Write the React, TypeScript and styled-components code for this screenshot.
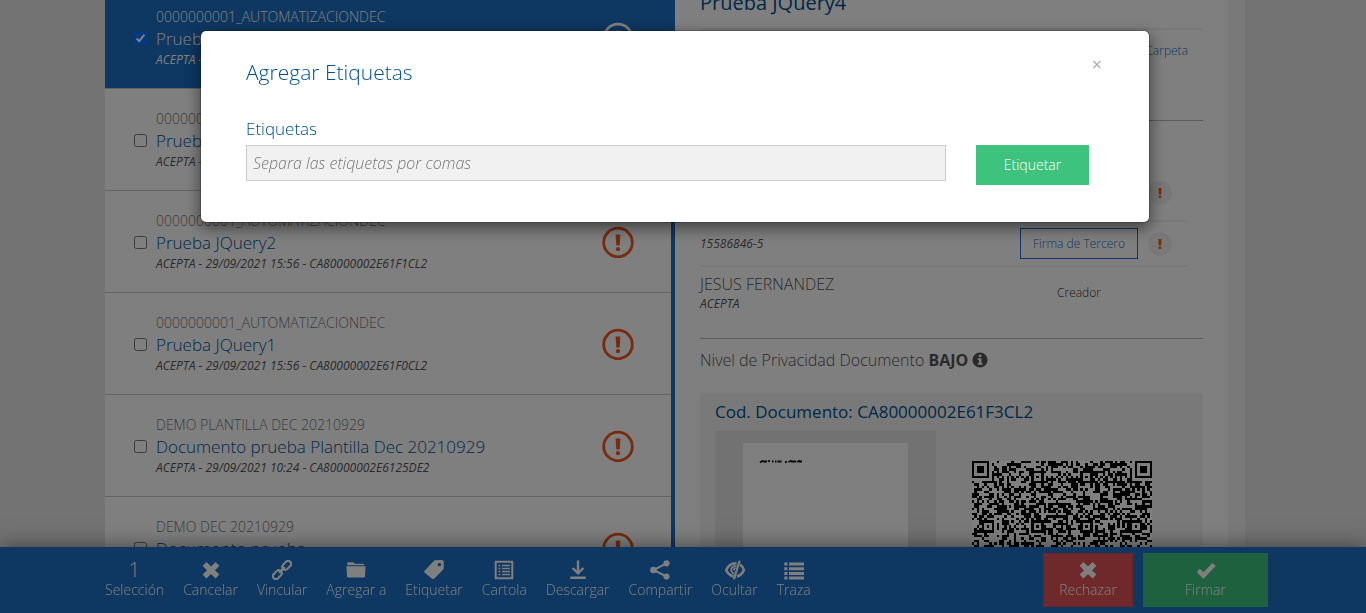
import React from "react";
import styled, { createGlobalStyle, css } from "styled-components";

const c = {
  brand: "#1c6ec2",
  ink: "#00508f",
  green: "#3dc37e",
  red: "#de5356",
  alert: "#f0561d",
  grey: "#777777",
  text: "#555555",
};

const GlobalStyle = createGlobalStyle`
  * { box-sizing: border-box; }
  html, body { margin: 0; height: 100%; overflow: hidden; }
  body { background: #e6e6e6; font-family: "Open Sans", sans-serif; font-weight: 300; color: ${c.text}; }
  h1, h2, h3, p { margin: 0; font-weight: 300; }
  button, input { font-family: inherit; font-weight: 300; }
  a { text-decoration: none; }
`;

/* ---------- page ---------- */

const Page = styled.div`
  height: 100vh;
  overflow: hidden;
  padding-right: 16px;
`;

const Container = styled.div`
  display: flex;
  align-items: stretch;
  max-width: 1140px;
  min-height: 100vh;
  margin: -13px auto 0;
  background: #f3f3f3;
  padding-right: 17px;
`;

const List = styled.ul`
  flex: 0 0 570px;
  margin: 0;
  padding: 0;
  list-style: none;
  background: #fff;
  border-right: 4px solid ${c.brand};
`;

const Row = styled.li<{ $selected?: boolean }>`
  display: flex;
  align-items: center;
  gap: 9px;
  padding: 20px 37px 19px 29px;
  border-bottom: 1px solid #c8c8c8;
  ${(p) =>
    p.$selected &&
    css`
      background: ${c.brand};
      p, h3 { color: #fff; }
    `}
`;

const RowCheck = styled.input`
  width: 13px;
  height: 13px;
  margin: 0;
`;

const RowText = styled.label`
  flex: 1;
  min-width: 0;
`;

const Folder = styled.p`
  font-size: 14px;
  line-height: 20px;
  color: ${c.grey};
`;

const DocName = styled.h3`
  font-size: 17px;
  line-height: 24px;
  color: ${c.ink};
`;

const Meta = styled.p`
  font-size: 12px;
  line-height: 18px;
  font-style: italic;
  font-weight: 400;
  color: ${c.text};
`;

const Status = styled.svg<{ $light?: boolean }>`
  flex: none;
  width: 32px;
  height: 32px;
  color: ${(p) => (p.$light ? "#fff" : c.alert)};
`;

/* ---------- detail ---------- */

const Detail = styled.section`
  flex: 1;
  min-width: 0;
  background: #fff;
  padding: 2px 25px 0;
`;

const DetailTitle = styled.h2`
  padding-bottom: 11px;
  border-bottom: 2px solid #f0f0f0;
  font-size: 20px;
  line-height: 28px;
  font-weight: 400;
  color: ${c.ink};
`;

const Tools = styled.div`
  display: flex;
  justify-content: flex-end;
  min-height: 91px;
  padding: 11px 15px;
  border-bottom: 1px solid #b8b8b8;
`;

const ToolLink = styled.a`
  font-size: 12px;
  line-height: 20px;
  color: ${c.brand};
`;

const Signers = styled.div`
  padding: 45px 0 19px;
  border-bottom: 1px solid #b8b8b8;
`;

const Signer = styled.div`
  display: grid;
  grid-template-columns: 1fr 118px 24px;
  align-items: center;
  column-gap: 10px;
  margin-right: 15px;
  padding: 6px 16px 6px 0;
  min-height: 45px;
  border-bottom: 2px solid #f0f0f0;
  &:first-child { min-height: 56px; }
  &:last-child { border-bottom: 0; min-height: 51px; }
`;

const SignerName = styled.p`
  font-size: 16px;
  line-height: 22px;
  color: ${c.text};
`;

const Outline = styled.button`
  height: 31px;
  padding: 0;
  border: 1px solid ${c.brand};
  background: transparent;
  font-size: 12px;
  color: ${c.brand};
`;

const Role = styled.p`
  font-size: 12px;
  line-height: 18px;
  text-align: center;
  color: #333;
`;

const Mark = styled.span`
  width: 24px;
  height: 24px;
  border-radius: 50%;
  background: #f0f0f0;
  color: ${c.alert};
  font-size: 14px;
  line-height: 24px;
  font-weight: 800;
  text-align: center;
`;

const Privacy = styled.p`
  display: flex;
  align-items: center;
  gap: 4px;
  padding: 9px 0;
  margin-bottom: 12px;
  font-size: 16px;
  line-height: 24px;
  b { font-weight: 700; }
`;

const InfoIcon = styled.svg`
  width: 16px;
  height: 16px;
`;

const Preview = styled.div`
  background: #f3f3f3;
  padding: 7px 15px 15px;
`;

const PreviewTitle = styled.h3`
  font-size: 17px;
  line-height: 24px;
  font-weight: 400;
  color: ${c.ink};
`;

const PreviewBody = styled.div`
  display: flex;
  align-items: flex-start;
  gap: 36px;
  margin-top: 7px;
`;

const Thumb = styled.div`
  flex: none;
  width: 221px;
  padding: 12px 28px;
  background: #e4e4e4;
`;

const Paper = styled.svg`
  display: block;
  width: 165px;
  height: 213px;
  background: #fff;
`;

const Qr = styled.svg`
  flex: none;
  width: 180px;
  height: 180px;
  margin-top: 30px;
  background: #fff;
`;

/* ---------- action bar ---------- */

const Bar = styled.nav`
  position: fixed;
  left: 0;
  right: 0;
  bottom: 0;
  display: flex;
  align-items: flex-start;
  min-height: 66px;
  padding: 6px 98px 6px 105px;
  background: ${c.brand};
  box-shadow: 0 0 20px rgba(0, 0, 0, 0.5);
`;

const Actions = styled.div`
  display: flex;
  gap: 19px;
`;

const BarItem = styled.button`
  display: flex;
  flex-direction: column;
  align-items: center;
  padding: 7px 0 0;
  border: 0;
  background: none;
  color: #fff;
  font-size: 14px;
  line-height: 19px;
  white-space: nowrap;
`;

const Count = styled.span`
  font-size: 20px;
  line-height: 20px;
`;

const BarIcon = styled.svg`
  width: 20px;
  height: 20px;
`;

const Finals = styled.div`
  display: flex;
  gap: 10px;
  margin-left: auto;
`;

const FinalButton = styled(BarItem)<{ $tone: string; $edge: string; $wide?: boolean }>`
  width: ${(p) => (p.$wide ? 125 : 90)}px;
  height: 54px;
  padding-top: 6px;
  background: ${(p) => p.$tone};
  border: 1px solid ${(p) => p.$edge};
`;

/* ---------- modal ---------- */

const Backdrop = styled.div`
  position: fixed;
  inset: 0;
  background: rgba(0, 0, 0, 0.5);
`;

const ModalLayer = styled.div`
  position: fixed;
  inset: 0;
  padding: 30px 16px 0 0;
`;

const Dialog = styled.div`
  max-width: 950px;
  margin: 0 auto;
  padding: 24px 45px 37px;
  background: #fff;
  background-clip: padding-box;
  border: 1px solid rgba(0, 0, 0, 0.2);
  border-radius: 6px;
  box-shadow: 0 5px 15px rgba(0, 0, 0, 0.5);
`;

const DialogHead = styled.div`
  display: flex;
  justify-content: space-between;
  align-items: flex-start;
  margin-bottom: 28px;
`;

const DialogTitle = styled.h1`
  padding-top: 3px;
  font-size: 21px;
  line-height: 28px;
  color: ${c.ink};
`;

const Close = styled.button`
  width: 14px;
  padding: 0;
  border: 0;
  background: none;
  color: #aaa;
  font-size: 18px;
  line-height: 18px;
  font-weight: 400;
`;

const Field = styled.label`
  display: block;
  padding-bottom: 2px;
  font-size: 17px;
  line-height: 29px;
  color: ${c.ink};
`;

const FormRow = styled.div`
  display: flex;
  align-items: flex-start;
  gap: 30px;
  padding-right: 15px;
`;

const TagInput = styled.input`
  flex: 1;
  min-width: 0;
  height: 36px;
  padding: 0 6px;
  border: 1px solid #ccc;
  background: #f1f1f1;
  font-size: 16px;
  &::placeholder { color: #777; font-style: italic; opacity: 1; }
`;

const Submit = styled.button`
  width: 113px;
  height: 40px;
  padding: 0 0 1px;
  border: 0;
  background: ${c.green};
  color: #fff;
  font-size: 14px;
`;

/* ---------- data ---------- */

const docs = [
  { folder: "0000000001_AUTOMATIZACIONDEC", name: "Prueba JQuery4", meta: "ACEPTA - 29/09/2021 15:57 - CA80000002E61F3CL2", selected: true },
  { folder: "0000000001_AUTOMATIZACIONDEC", name: "Prueba JQuery3", meta: "ACEPTA - 29/09/2021 15:57 - CA80000002E61F2CL2" },
  { folder: "0000000001_AUTOMATIZACIONDEC", name: "Prueba JQuery2", meta: "ACEPTA - 29/09/2021 15:56 - CA80000002E61F1CL2" },
  { folder: "0000000001_AUTOMATIZACIONDEC", name: "Prueba JQuery1", meta: "ACEPTA - 29/09/2021 15:56 - CA80000002E61F0CL2" },
  { folder: "DEMO PLANTILLA DEC 20210929", name: "Documento prueba Plantilla Dec 20210929", meta: "ACEPTA - 29/09/2021 10:24 - CA80000002E6125DE2" },
  { folder: "DEMO DEC 20210929", name: "Documento prueba", meta: "ACEPTA - 29/09/2021 10:20 - CA80000002E6124DE2" },
];

const cross = <path d="M3.5 4 16.5 16.5M16.5 4 3.5 16.5" stroke="currentColor" strokeWidth="5.4" fill="none" />;

const actions: { label: string; icon: React.ReactNode }[] = [
  { label: "Cancelar", icon: cross },
  {
    label: "Vincular",
    icon: (
      <g fill="none" stroke="currentColor" strokeWidth="2.1" transform="rotate(-45 10 10)">
        <rect x="-1.6" y="7" width="10" height="6" rx="3" />
        <rect x="11.6" y="7" width="10" height="6" rx="3" />
        <path d="M6 10h8" strokeWidth="2.4" />
      </g>
    ),
  },
  {
    label: "Agregar a",
    icon: (
      <g fill="currentColor">
        <path d="M1.2 5.2V3.4Q1.2 2.2 2.4 2.2H7q.8 0 1.200.8l.4.7H17q1.200 0 1.200 1.200v.3z" />
        <path d="M.4 6.300h19.200l-.6 10q-.1 1.200-1.300 1.200H2.300q-1.200 0-1.300-1.200z" />
      </g>
    ),
  },
  {
    label: "Etiquetar",
    icon: (
      <path
        fill="currentColor"
        fillRule="evenodd"
        d="M.6 10.700 9.300 1.500Q10.300.4 11.800.3l6-.2q2 0 2 2v5.500q0 1.400-1 2.500l-8.700 8.700q-1 .9-2 0L.6 12.700q-.9-1 0-2zM15.400 2.900a1.700 1.700 0 1 0 .01 0z"
      />
    ),
  },
  {
    label: "Cartola",
    icon: (
      <g>
        <path d="M1.700 1.700h16.600v16.600H1.700z" fill="none" stroke="currentColor" strokeWidth="2" />
        <path d="M4.500 5.500h2M8 5.500h8M4.500 8.500h2M8 8.500h8M4.500 11.500h2M8 11.500h8M4.500 14.500h2M8 14.500h8" stroke="currentColor" strokeWidth="1.500" />
      </g>
    ),
  },
  {
    label: "Descargar",
    icon: (
      <g stroke="currentColor" fill="none" strokeWidth="2.400">
        <path d="M10 .5v12.500M4.600 8 10 13.300 15.400 8M2.300 17.800h15.400" />
      </g>
    ),
  },
  {
    label: "Compartir",
    icon: (
      <g>
        <path d="M16.500 3.300 3.500 10l13 6.500" stroke="currentColor" strokeWidth="2" fill="none" />
        <g fill="currentColor">
          <circle cx="16.500" cy="3.300" r="3.100" />
          <circle cx="3.500" cy="10" r="3.300" />
          <circle cx="16.500" cy="16.500" r="3.100" />
        </g>
      </g>
    ),
  },
  {
    label: "Ocultar",
    icon: (
      <g fill="none" stroke="currentColor">
        <path d="M11.500 3.200C6 3 2.900 6 1.200 10c1.300 3.200 4 5.600 7.400 6.400" strokeWidth="2.600" />
        <path d="M15 4.500q2.800 2 3.900 5.500c-1.400 3.600-3.700 5.500-6.900 6.500" strokeWidth="2.600" />
        <path d="M11.500 5.800Q6.200 6 6.200 10q0 2.300 3 3.800M10.700 8Q8.800 8.300 8.800 10.500" strokeWidth="1.700" />
        <path d="M14.600.8 9 19.200" strokeWidth="2.200" />
      </g>
    ),
  },
  {
    label: "Traza",
    icon: (
      <g stroke="currentColor" strokeWidth="3">
        <path d="M.3 4h3.200M5 4h15M.3 8.700h3.200M5 8.700h15M.3 13.400h3.200M5 13.400h15M.3 18h3.200M5 18h15" />
      </g>
    ),
  },
];

/* ---------- QR drawing ---------- */

const SIZE = 73;

function ring(dx: number, dy: number) {
  return Math.max(Math.abs(dx), Math.abs(dy));
}

function qrPath() {
  const align = [6, 26, 46, 66];
  let seed = 20210929;
  let d = "";
  for (let y = 0; y < SIZE; y++) {
    for (let x = 0; x < SIZE; x++) {
      seed = (Math.imul(seed, 1664525) + 1013904223) >>> 0;
      let on = (seed >>> 16) % 100 < 50;
      if (x === 6 || y === 6) on = (x + y) % 2 === 0;
      for (const ax of align)
        for (const ay of align) {
          const r = ring(x - ax, y - ay);
          if (r <= 2) on = r !== 1;
        }
      for (const [fx, fy] of [[3, 3], [SIZE - 4, 3], [3, SIZE - 4]]) {
        const r = ring(x - fx, y - fy);
        if (r <= 4) on = r === 3 || r <= 1;
      }
      if (on) d += `M${x} ${y}h1v1h-1z`;
    }
  }
  return d;
}

const qr = qrPath();

function Alert({ light }: { light?: boolean }) {
  return (
    <Status viewBox="0 0 32 32" $light={light} aria-label="Pendiente">
      <circle cx="16" cy="16.500" r="14.300" fill="none" stroke="currentColor" strokeWidth="2.800" />
      <path d="M13.600 8.500h4.800l-.7 11h-3.400z" fill="currentColor" />
      <circle cx="16" cy="23.200" r="2.100" fill="currentColor" />
    </Status>
  );
}

export default function App() {
  return (
    <>
      <GlobalStyle />
      <Page>
        <Container>
          <List>
            {docs.map((d, i) => (
              <Row key={d.meta} $selected={d.selected}>
                <RowCheck type="checkbox" id={`doc-${i}`} defaultChecked={d.selected} />
                <RowText htmlFor={`doc-${i}`}>
                  <Folder>{d.folder}</Folder>
                  <DocName>{d.name}</DocName>
                  <Meta>{d.meta}</Meta>
                </RowText>
                <Alert light={d.selected} />
              </Row>
            ))}
          </List>
          <Detail>
            <DetailTitle>Prueba JQuery4</DetailTitle>
            <Tools>
              <ToolLink href="#carpeta">Carpeta</ToolLink>
            </Tools>
            <Signers>
              <Signer>
                <span />
                <span />
                <Mark>!</Mark>
              </Signer>
              <Signer>
                <Meta>15586846-5</Meta>
                <Outline type="button">Firma de Tercero</Outline>
                <Mark>!</Mark>
              </Signer>
              <Signer>
                <div>
                  <SignerName>JESUS FERNANDEZ</SignerName>
                  <Meta>ACEPTA</Meta>
                </div>
                <Role>Creador</Role>
              </Signer>
            </Signers>
            <Privacy>
              <span>
                Nivel de Privacidad Documento <b>BAJO</b>
              </span>
              <InfoIcon viewBox="0 0 16 16" aria-hidden="true">
                <circle cx="8" cy="8" r="7.600" fill="currentColor" />
                <path d="M6.700 2.700h2.700v2.200H6.700zM5.700 6.300h3.700v4.900h1.200v1.500H5.700v-1.500h1.200V7.800H5.700z" fill="#fff" />
              </InfoIcon>
            </Privacy>
            <Preview>
              <PreviewTitle>Cod. Documento: CA80000002E61F3CL2</PreviewTitle>
              <PreviewBody>
                <Thumb>
                  <Paper viewBox="0 0 165 213" aria-hidden="true">
                    <path
                      d="M17 19.500l3-2M20 18.500h4M25 18.500l2-1M29 18.500h1.500M32 18.500h1.500M34.500 18.500h4M42 19.500l2-1M45.500 19l3-1.500M48 18.500h5M54 19l3-1.500M56 18.500h3"
                      stroke="#111"
                      strokeWidth="1.800"
                    />
                  </Paper>
                </Thumb>
                <Qr viewBox={`0 0 ${SIZE} ${SIZE}`} shapeRendering="crispEdges" aria-label="Código QR">
                  <path d={qr} fill="#000" />
                </Qr>
              </PreviewBody>
            </Preview>
          </Detail>
        </Container>
      </Page>

      <Bar>
        <Actions>
          <BarItem type="button">
            <Count>1</Count>
            Selección
          </BarItem>
          {actions.map((a) => (
            <BarItem type="button" key={a.label}>
              <BarIcon viewBox="0 0 20 20" aria-hidden="true">{a.icon}</BarIcon>
              {a.label}
            </BarItem>
          ))}
        </Actions>
        <Finals>
          <FinalButton type="button" $tone={c.red} $edge="#e0444a">
            <BarIcon viewBox="0 0 20 20" aria-hidden="true">{cross}</BarIcon>
            Rechazar
          </FinalButton>
          <FinalButton type="button" $wide $tone={c.green} $edge={c.green}>
            <BarIcon viewBox="0 0 20 20" aria-hidden="true">
              <path d="M2.200 10.500 7.500 15.500 18 4.500" stroke="currentColor" strokeWidth="4.500" fill="none" />
            </BarIcon>
            Firmar
          </FinalButton>
        </Finals>
      </Bar>

      <Backdrop />
      <ModalLayer>
        <Dialog role="dialog" aria-labelledby="dialog-title">
          <DialogHead>
            <DialogTitle id="dialog-title">Agregar Etiquetas</DialogTitle>
            <Close type="button" aria-label="Cerrar">×</Close>
          </DialogHead>
          <Field htmlFor="tags">Etiquetas</Field>
          <FormRow>
            <TagInput id="tags" type="text" placeholder="Separa las etiquetas por comas" />
            <Submit type="button">Etiquetar</Submit>
          </FormRow>
        </Dialog>
      </ModalLayer>
    </>
  );
}
